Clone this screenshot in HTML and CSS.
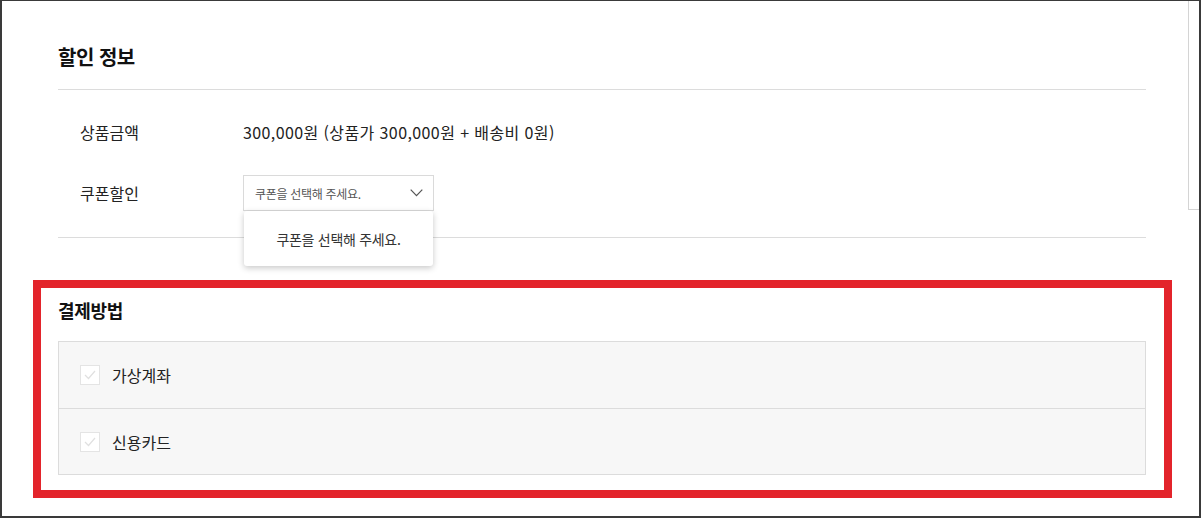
FILE: index.html
```html
<!DOCTYPE html>
<html lang="ko">
<head>
    <meta charset="UTF-8">
    <meta name="viewport" content="width=device-width, initial-scale=1.0">
    <title>주문서</title>
    <link rel="stylesheet" href="styles.css">
</head>
<body>
    <div class="frame">
        <div class="scroll-thumb"></div>

        <section class="discount">
            <h2 class="section-title with-line">할인 정보</h2>
            <div class="info-rows">
                <div class="row">
                    <div class="label">상품금액</div>
                    <div class="value">300,000원 (상품가 300,000원 + 배송비 0원)</div>
                </div>
                <div class="row">
                    <div class="label">쿠폰할인</div>
                    <div class="select-wrap">
                        <div class="select">
                            <span>쿠폰을 선택해 주세요.</span>
                            <svg width="13" height="8" viewBox="0 0 13 8">
                                <polyline points="0.7,0.7 6.5,6.7 12.3,0.7" fill="none" stroke="#555" stroke-width="1.2"/>
                            </svg>
                        </div>
                        <div class="dropdown">쿠폰을 선택해 주세요.</div>
                    </div>
                </div>
            </div>
        </section>

        <section class="payment">
            <h2 class="section-title small">결제방법</h2>
            <div class="pay-list">
                <label class="pay-item">
                    <span class="check">
                        <svg width="12" height="10" viewBox="0 0 12 10">
                            <polyline points="1,5 4.5,8.5 11,1" fill="none" stroke="#e0e0e0" stroke-width="1.2"/>
                        </svg>
                    </span>
                    가상계좌
                </label>
                <label class="pay-item">
                    <span class="check">
                        <svg width="12" height="10" viewBox="0 0 12 10">
                            <polyline points="1,5 4.5,8.5 11,1" fill="none" stroke="#e0e0e0" stroke-width="1.2"/>
                        </svg>
                    </span>
                    신용카드
                </label>
            </div>
        </section>

        <div class="highlight"></div>
    </div>
</body>
</html>
```

FILE: styles.css
```css
html,
body {
    margin: 0;
    padding: 0;
    background: #fff;
    font-family: "Noto Sans CJK KR", "Noto Sans", sans-serif;
    color: #222;
}

.frame {
    position: relative;
    box-sizing: border-box;
    width: 1201px;
    height: 518px;
    border: 2px solid #3a3a3a;
    border-top-width: 1px;
    padding: 0 53px 0 56px;
    overflow: hidden;
}

/* scrollbar thumb left over from the capture */
.scroll-thumb {
    position: absolute;
    top: 0;
    right: 0;
    width: 10px;
    height: 208px;
    border-left: 1px solid #d4d4d4;
    border-bottom: 1px solid #d4d4d4;
}

.section-title {
    margin: 0;
    font-size: 20px;
    font-weight: 700;
    color: #111;
    letter-spacing: -0.5px;
}

.section-title.with-line {
    padding: 41px 0 17px;
    line-height: 30px;
    border-bottom: 1px solid #dcdcdc;
}

.section-title.small {
    font-size: 18px;
    line-height: 26px;
    letter-spacing: -0.3px;
}

.info-rows {
    display: flex;
    flex-direction: column;
    gap: 25px;
    padding: 24px 0 26px 22px;
    border-bottom: 1px solid #dcdcdc;
}

.row {
    display: flex;
    align-items: center;
    height: 36px;
    font-size: 16px;
}

.row .label {
    width: 163px;
    color: #222;
}

.row .value {
    color: #222;
    letter-spacing: 0.4px;
}

.select-wrap {
    position: relative;
}

.select {
    box-sizing: border-box;
    display: flex;
    align-items: center;
    justify-content: space-between;
    width: 191px;
    height: 36px;
    padding: 0 10px 0 11px;
    border: 1px solid #dadada;
    font-size: 12px;
    letter-spacing: -0.3px;
    color: #555;
}

.dropdown {
    position: absolute;
    top: 36px;
    left: 1px;
    box-sizing: border-box;
    width: 189px;
    height: 55px;
    display: flex;
    align-items: center;
    justify-content: center;
    background: #fff;
    border-radius: 3px;
    box-shadow: 0 2px 6px rgba(0, 0, 0, 0.22);
    font-size: 14px;
    letter-spacing: -0.3px;
    color: #333;
    z-index: 2;
}

.payment {
    padding-top: 59px;
}

.pay-list {
    margin-top: 18px;
    border: 1px solid #dcdcdc;
    background: #f7f7f7;
}

.pay-item {
    display: flex;
    align-items: center;
    gap: 12px;
    height: 66px;
    padding-left: 21px;
    font-size: 16px;
    color: #222;
}

.pay-item + .pay-item {
    height: 65px;
    border-top: 1px solid #dcdcdc;
}

.check {
    box-sizing: border-box;
    width: 20px;
    height: 20px;
    display: flex;
    align-items: center;
    justify-content: center;
    background: #fff;
    border: 1px solid #e4e4e4;
}

/* red annotation box */
.highlight {
    position: absolute;
    left: 31px;
    top: 279px;
    width: 1139px;
    height: 218px;
    box-sizing: border-box;
    border: 8px solid #e3242b;
    pointer-events: none;
}
```
